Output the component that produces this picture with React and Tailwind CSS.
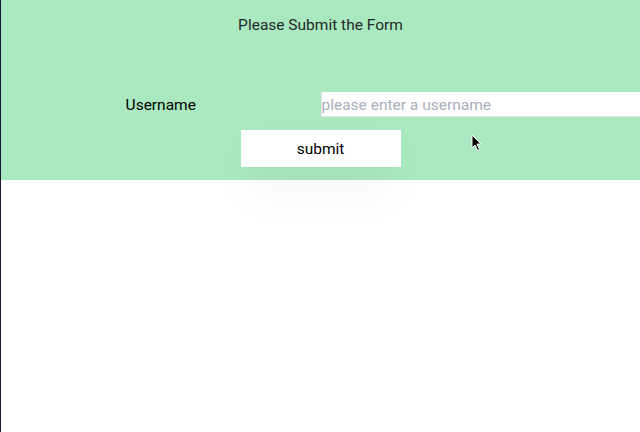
export default function App() {
  return (
    <div className="h-[432px] w-[640px] bg-white border-l border-[#1b1a35] relative overflow-hidden" style={{ fontFamily: "Roboto, 'Noto Sans', sans-serif" }}>
      <div className="h-[180px] bg-[#aae8bf] flex flex-col">
        <h1 className="pt-[15px] text-center text-[15.5px] leading-[20px] text-[#1f2a2a]">Please Submit the Form</h1>
        <div className="grid grid-cols-2 mt-[57px] items-center">
          <label className="pt-[2px] text-center text-[15.5px] text-black">Username</label>
          <input
            className="h-[25px] w-[330px] pt-[2px] bg-white border-b border-l border-[#e2e5ea] px-0 text-[15.5px] outline-none placeholder:text-[#a8b0be]"
            placeholder="please enter a username"
          />
        </div>
        <div className="flex justify-center mt-[13px]">
          <button className="w-[160px] h-[37px] pt-[2px] bg-white text-[15.5px] text-black shadow-[0_25px_50px_-12px_rgba(0,0,0,0.12)]">submit</button>
        </div>
      </div>
      <svg className="absolute left-[470px] top-[134px]" width="12" height="18" viewBox="0 0 12 18">
        <path d="M1 1 L1 14 L4 11 L6.5 16.5 L8.5 15.5 L6 10 L10 10 Z" fill="#000" stroke="#fff" strokeWidth="1" />
      </svg>
    </div>
  );
}
